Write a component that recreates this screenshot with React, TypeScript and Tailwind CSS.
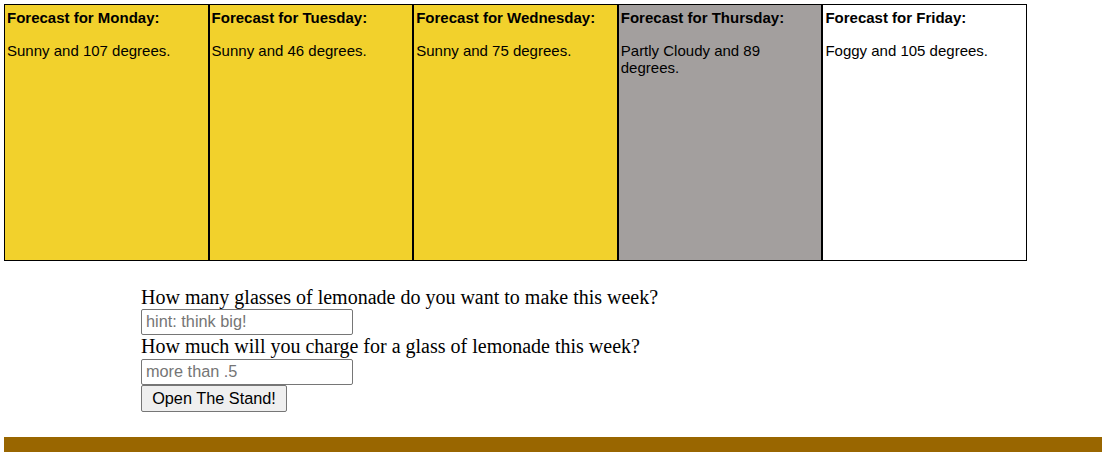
const days = [
  { day: "Monday", text: "Sunny and 107 degrees.", bg: "bg-[#f2d12c]" },
  { day: "Tuesday", text: "Sunny and 46 degrees.", bg: "bg-[#f2d12c]" },
  { day: "Wednesday", text: "Sunny and 75 degrees.", bg: "bg-[#f2d12c]" },
  { day: "Thursday", text: "Partly Cloudy and 89 degrees.", bg: "bg-[#a39f9e]" },
  { day: "Friday", text: "Foggy and 105 degrees.", bg: "bg-white" },
];

export default function App() {
  return (
    <main className="min-h-[475px] bg-white p-[4px] text-black">
      {/* forecast boxes */}
      <div className="flex font-['Liberation_Sans',Arial,sans-serif] text-[15px] leading-[17px]">
        {days.map((d) => (
          <div
            key={d.day}
            className={`${d.bg} w-[204.6px] h-[257px] border border-black pl-[2px] pr-[4px] pt-[4px]`}
          >
            <h4 className="font-bold">Forecast for {d.day}:</h4>
            <p className="mt-[16px]">{d.text}</p>
          </div>
        ))}
      </div>

      {/* form */}
      <div className="ml-[137px] mt-[25px] flex flex-col items-start font-['Liberation_Serif','Times_New_Roman',serif] text-[20px] leading-[23px]">
        <label>How many glasses of lemonade do you want to make this week?</label>
        <input
          type="text"
          placeholder="hint: think big!"
          className="w-[212px] h-[26px] border border-[#767676] rounded-[2px] px-[4px] pb-[1px] font-['Liberation_Sans',Arial,sans-serif] text-[16.3px] placeholder:text-[#757575] outline-none"
        />
        <label>How much will you charge for a glass of lemonade this week?</label>
        <input
          type="text"
          placeholder="more than .5"
          className="mt-[1px] w-[212px] h-[26px] border border-[#767676] rounded-[2px] px-[4px] pb-[1px] font-['Liberation_Sans',Arial,sans-serif] text-[16.3px] placeholder:text-[#757575] outline-none"
        />
        <button className="w-[146px] h-[27px] border border-[#767676] rounded-[2px] bg-[#efefef] font-['Liberation_Sans',Arial,sans-serif] text-[16.3px] leading-[19px]">
          Open The Stand!
        </button>
      </div>

      {/* bottom bar */}
      <div className="mt-[25px] w-[1098px] h-[15px] bg-[#996600]" />
    </main>
  );
}
